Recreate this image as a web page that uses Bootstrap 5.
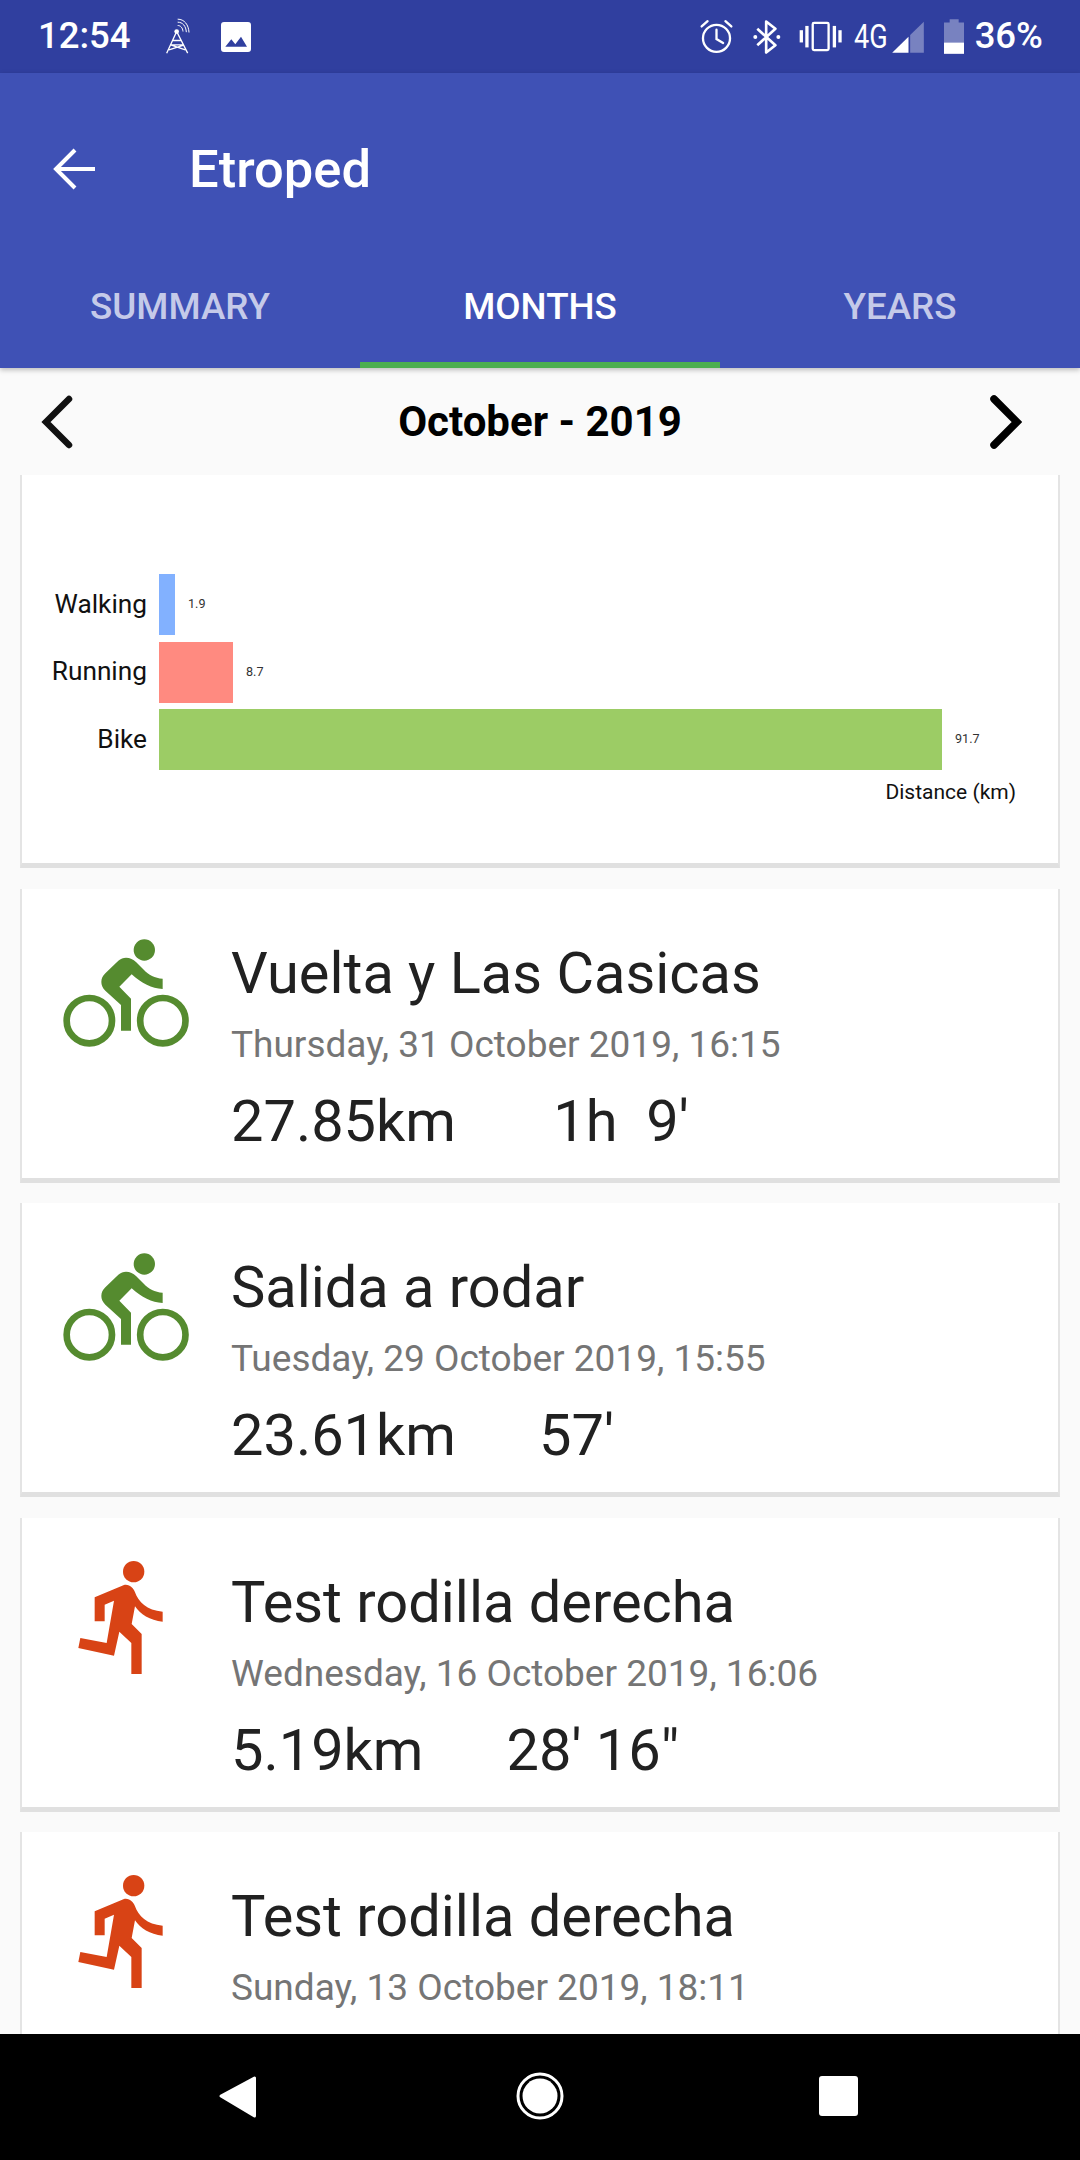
<!DOCTYPE html>
<html lang="en">
<head>
    <meta charset="UTF-8">
    <meta name="viewport" content="width=device-width, initial-scale=1.0">
    <title>Etroped</title>
    <link href="https://cdn.jsdelivr.net/npm/bootstrap@5.3.0/dist/css/bootstrap.min.css" rel="stylesheet">
    <style>
        html, body { height: 2160px; overflow: hidden; }
        body { font-family: Roboto, "Liberation Sans", sans-serif; background: #fafafa; }
        .phone { height: 2160px; }
        .status-bar { flex: none; height: 73px; background: #303f9f; color: #fff; padding: 0 37px 0 38px; }
        .status-time { font-size: 36.5px; font-weight: 500; width: 127px; }
        .status-pct { font-size: 36.5px; font-weight: 500; margin-left: 11px; }
        .net-label { width: 34px; margin-left: 9px; font-size: 33px; text-align: center; transform: scaleX(.82); }
        .s-pic { margin-left: 31px; }
        .s-bt { margin-left: 20px; }
        .s-vib { margin-left: 18px; }
        .s-sig { margin-left: 7px; }
        .s-bat { margin-left: 20px; }
        .app-bar { flex: none; background: #3f51b5; color: #fff; height: 295px; box-shadow: 0 2px 5px rgba(0,0,0,.25); position: relative; z-index: 2; }
        .title-row { height: 192px; padding-left: 53px; }
        .app-title { font-size: 52.5px; font-weight: 500; margin: 0 0 0 94px; }
        .tab-row { height: 103px; }
        .tab-item { width: 360px; font-size: 36.75px; font-weight: 500; color: #c5cae9; padding-top: 14px; text-align: center; }
        .tab-item.on { color: #fff; border-bottom: 6px solid #4caf50; }
        .month-row { flex: none; height: 107px; padding: 0 41px; }
        .month-side { width: 120px; }
        .month-next { margin-right: 17px; }
        .month-name { font-size: 42px; font-weight: 700; color: #000; }
        .sheet { flex: 1 1 0; min-height: 0; overflow: hidden; padding: 0 20px; }
        .tile { background: #fff; border-left: 2px solid #e4e4e4; border-right: 2px solid #e4e4e4; border-bottom: 5px solid #e0e0e0; }
        .chart-tile { height: 393px; padding-top: 99px; position: relative; }
        .chart-line { height: 61px; margin-bottom: 6.5px; }
        .chart-label { width: 125px; text-align: right; font-size: 26.25px; color: #111; margin-right: 12px; }
        .chart-bar { height: 61px; }
        .chart-num { font-size: 12.6px; color: #333; margin-left: 13px; }
        .axis-name { position: absolute; right: 42px; top: 302px; font-size: 21px; color: #111; }
        .run-tile { height: 294px; margin-top: 20.5px; }
        .run-icon { flex: none; width: 180px; height: 130px; margin: 31px 11px 0 18px; }
        .run-text { padding-top: 49px; }
        .run-name { font-size: 57.75px; line-height: 70px; color: #212121; }
        .run-date { font-size: 37px; line-height: 50px; color: #757575; margin-top: 12px; }
        .run-stats { font-size: 57.75px; line-height: 70px; color: #212121; margin-top: 16px; }
        .run-time { margin-left: 83px; }
        .nav-bar { flex: none; height: 126px; background: #000; }
    </style>
</head>
<body>
    <div class="phone d-flex flex-column">
        <div class="status-bar d-flex align-items-center">
            <span class="status-time">12:54</span>
            <svg width="25" height="37" viewBox="45 25 75 110" fill="none" stroke="#fff" stroke-width="4"><path d="M80 65 50 130M80 65l33 65M68 92h26M62 105l39 0M57 120l44-14M62 105l44 15"/><circle cx="80" cy="65" r="7" fill="#fff" stroke="none"/><path d="M83 47c9 0 15 7 16 18M83 37c15 0 25 12 26 30M83 28c20 0 33 17 34 40" stroke-width="3"/></svg>
            <svg class="s-pic" width="30" height="30" viewBox="0 0 30 30"><path fill="#fff" fill-rule="evenodd" d="M3 0h24a3 3 0 0 1 3 3v24a3 3 0 0 1-3 3H3a3 3 0 0 1-3-3V3a3 3 0 0 1 3-3zm1.300 24.700H26L20 14.700l-5.700 7.600-4-5z"/></svg>
            <div class="ms-auto d-flex align-items-center">
                <svg width="33" height="35" viewBox="55 28 100 105" fill="none" stroke="#fff" stroke-width="7"><circle cx="105" cy="86" r="41"/><path d="M105 60v28l20 12M60 50l18-16M150 50l-18-16" stroke-linecap="round"/></svg>
                <svg class="s-bt" width="28" height="36" viewBox="215 25 85 108" fill="none" stroke="#fff" stroke-width="8" stroke-linejoin="round"><path d="M228 54l55 50-28 22V32l28 22-55 50"/><circle cx="222" cy="79" r="6" fill="#fff" stroke="none"/><circle cx="292" cy="79" r="6" fill="#fff" stroke="none"/></svg>
                <svg class="s-vib" width="43" height="31" viewBox="353 33 130 92" fill="#fff"><rect x="355" y="60" width="10" height="37"/><rect x="372" y="47" width="10" height="65"/><rect x="455" y="47" width="10" height="65"/><rect x="472" y="60" width="10" height="37"/><rect x="394.500" y="38" width="48" height="82" rx="4" fill="none" stroke="#fff" stroke-width="7"/></svg>
                <span class="net-label">4G</span>
                <svg class="s-sig" width="32" height="32" viewBox="633 33 95 96"><path fill="#fff" opacity=".35" d="M687 75l41-40v93h-41z"/><path fill="#fff" d="M633 128l49-48v48z"/></svg>
                <svg class="s-bat" width="20" height="35" viewBox="788 28 60 104"><path fill="#fff" opacity=".35" d="M805 28h27v10h16v60h-60V38h17z"/><path fill="#fff" d="M788 98h60v34h-60z"/></svg>
                <span class="status-pct">36%</span>
            </div>
        </div>

        <div class="app-bar">
            <div class="title-row d-flex align-items-center">
                <svg width="42" height="42" viewBox="0 0 42 42" fill="none" stroke="#fff" stroke-width="4"><path d="M42 21H3M22 2 3 21l19 19"/></svg>
                <h1 class="app-title">Etroped</h1>
            </div>
            <div class="tab-row d-flex">
                <div class="tab-item">SUMMARY</div>
                <div class="tab-item on">MONTHS</div>
                <div class="tab-item">YEARS</div>
            </div>
        </div>

        <div class="month-row d-flex align-items-center">
            <div class="month-side"><svg class="d-block" width="32" height="54" viewBox="0 0 32 54" fill="none" stroke="#111" stroke-width="6.500" stroke-linecap="round"><path d="M28 4 5 27l23 23"/></svg></div>
            <div class="month-name flex-grow-1 text-center">October - 2019</div>
            <div class="month-side d-flex justify-content-end"><svg class="month-next d-block" width="32" height="54" viewBox="0 0 32 54" fill="none" stroke="#000" stroke-width="7.500" stroke-linecap="round"><path d="M4 4l23 23L4 50"/></svg></div>
        </div>

        <div class="sheet">
            <div class="tile chart-tile">
                <div class="chart-line d-flex align-items-center">
                    <span class="chart-label">Walking</span>
                    <div class="chart-bar" style="width: 16px; background: #82b1ff"></div>
                    <span class="chart-num">1.9</span>
                </div>
                <div class="chart-line d-flex align-items-center">
                    <span class="chart-label">Running</span>
                    <div class="chart-bar" style="width: 74px; background: #ff8a80"></div>
                    <span class="chart-num">8.7</span>
                </div>
                <div class="chart-line d-flex align-items-center">
                    <span class="chart-label">Bike</span>
                    <div class="chart-bar" style="width: 783px; background: #9ccc65"></div>
                    <span class="chart-num">91.7</span>
                </div>
                <span class="axis-name">Distance (km)</span>
            </div>

            <div class="tile run-tile d-flex">
                <svg class="run-icon" viewBox="0 0 540 390"><use href="#bike-icon"/></svg>
                <div class="run-text">
                    <div class="run-name">Vuelta y Las Casicas</div>
                    <div class="run-date">Thursday, 31 October 2019, 16:15</div>
                    <div class="run-stats d-flex"><span>27.85km</span><span class="run-time">&nbsp;1h&nbsp;&nbsp;9'</span></div>
                </div>
            </div>
            <div class="tile run-tile d-flex">
                <svg class="run-icon" viewBox="0 0 540 390"><use href="#bike-icon"/></svg>
                <div class="run-text">
                    <div class="run-name">Salida a rodar</div>
                    <div class="run-date">Tuesday, 29 October 2019, 15:55</div>
                    <div class="run-stats d-flex"><span>23.61km</span><span class="run-time">57'</span></div>
                </div>
            </div>
            <div class="tile run-tile d-flex">
                <svg class="run-icon" viewBox="-30 0 540 390"><use href="#run-icon"/></svg>
                <div class="run-text">
                    <div class="run-name">Test rodilla derecha</div>
                    <div class="run-date">Wednesday, 16 October 2019, 16:06</div>
                    <div class="run-stats d-flex"><span>5.19km</span><span class="run-time">28' 16"</span></div>
                </div>
            </div>
            <div class="tile run-tile d-flex">
                <svg class="run-icon" viewBox="-30 0 540 390"><use href="#run-icon"/></svg>
                <div class="run-text">
                    <div class="run-name">Test rodilla derecha</div>
                    <div class="run-date">Sunday, 13 October 2019, 18:11</div>
                </div>
            </div>
        </div>

        <div class="nav-bar">
            <svg class="d-block" width="1080" height="126" viewBox="0 0 1080 126"><path fill="#fff" stroke="#fff" stroke-width="3" stroke-linejoin="round" d="M254.500 44v38L221 62z"/><circle cx="540" cy="62" r="22" fill="none" stroke="#fff" stroke-width="3"/><circle cx="540" cy="62" r="17.500" fill="#fff"/><rect x="819" y="42" width="39" height="40" rx="3" fill="#fff"/></svg>
        </div>
    </div>

    <svg width="0" height="0" class="position-absolute">
        <defs>
            <g id="bike-icon" fill="#558b2f">
                <circle cx="313" cy="90" r="32"/>
                <path d="M258 113c12 0 22 5 30 13l24 24c13 14 33 25 56 26v31c-33-1-63-17-93-44l-37 37 35 36v96h-30v-77l-47-43c-16-15-16-37 0-52l39-38c7-6 15-9 23-9z"/>
                <circle cx="148" cy="302" r="68" fill="none" stroke="#558b2f" stroke-width="20"/>
                <circle cx="368.500" cy="302" r="68" fill="none" stroke="#558b2f" stroke-width="20"/>
            </g>
            <g id="run-icon" fill="#d84315">
                <circle cx="251" cy="68" r="32"/>
                <path d="M134 145l88-37c18-3 28 10 33 22 10 28 35 55 83 58v30c-38-3-68-23-83-46l-10 53 30 30v120h-31v-93l-36-34-16 72-107-23 6-30 79 15 22-127-28 12v50h-30z"/>
            </g>
        </defs>
    </svg>

    <script src="https://cdn.jsdelivr.net/npm/bootstrap@5.3.0/dist/js/bootstrap.bundle.min.js"></script>
</body>
</html>
